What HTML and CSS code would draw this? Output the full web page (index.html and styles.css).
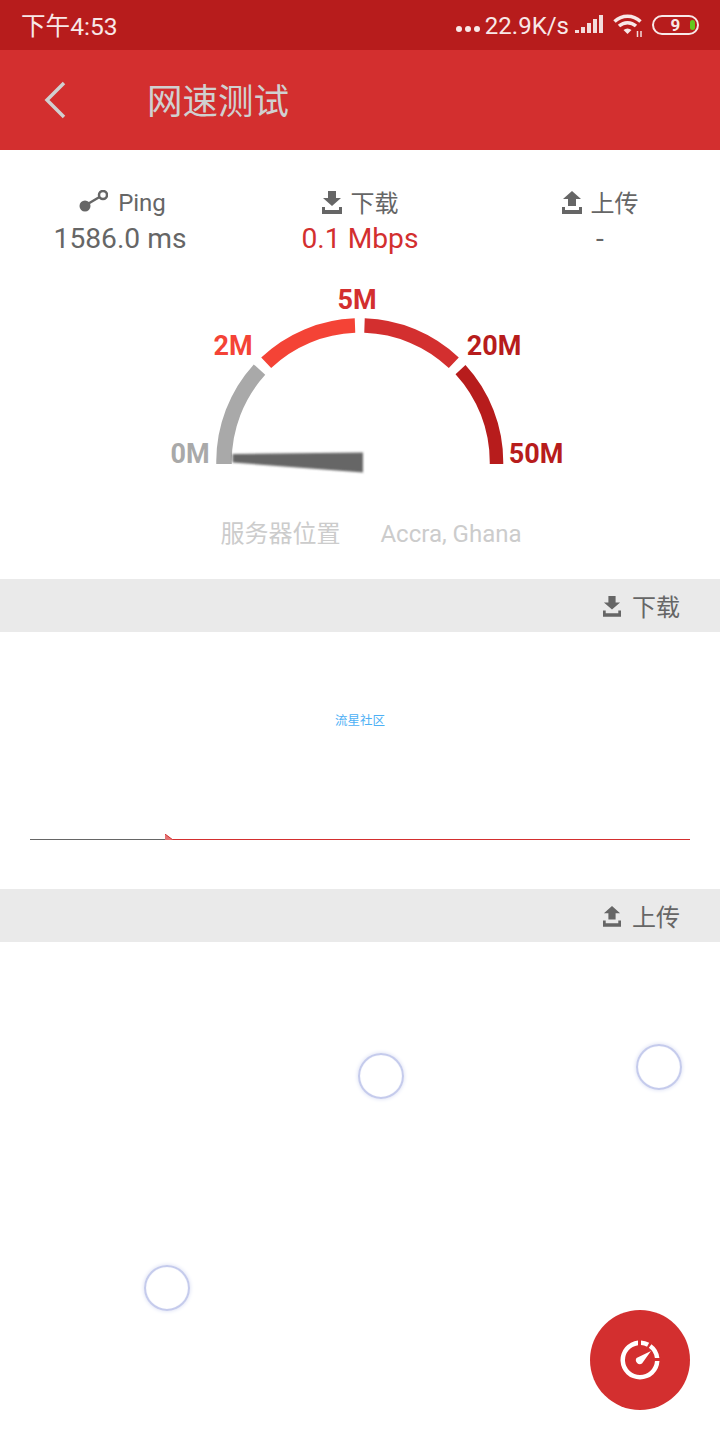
FILE: index.html
```html
<!DOCTYPE html>
<html lang="zh-CN">
<head>
    <meta charset="UTF-8">
    <title>网速测试</title>
    <link rel="stylesheet" href="styles.css">
</head>
<body>
    <div class="page">
        <div class="statusbar">
            <span class="time">下午4:53</span>
            <div class="status-right">
                <span class="dots"><i></i><i></i><i></i></span>
                <span class="netspeed">22.9K/s</span>
                <svg class="signal" width="28" height="20" viewBox="0 0 28 20">
                    <rect x="0" y="15" width="4" height="3" fill="#f3dcdc"/>
                    <rect x="6" y="12" width="4" height="6" fill="#f3dcdc"/>
                    <rect x="12" y="8" width="4" height="10" fill="#f3dcdc"/>
                    <rect x="18" y="4" width="4" height="14" fill="#f3dcdc"/>
                    <rect x="24" y="0" width="4" height="18" fill="#f3dcdc"/>
                </svg>
                <svg class="wifi" width="30" height="24" viewBox="0 0 30 24">
                    <path d="M1.5 8.5 C9 1.5 20 1.500 27.500 8.500" fill="none" stroke="#f8e8e8" stroke-width="3.500"/>
                    <path d="M6 13 C11 8.500 18 8.500 23 13" fill="none" stroke="#f8e8e8" stroke-width="3.500"/>
                    <path d="M10.500 17 C13 15 16 15 18.500 17 L14.500 21 Z" fill="#f8e8e8"/>
                    <path d="M24.500 18 v6 M28 18 v6" stroke="#f3dcdc" stroke-width="1.500"/>
                </svg>
                <div class="battery"><span class="batt-num">9</span><span class="batt-level"></span></div>
            </div>
        </div>

        <div class="appbar">
            <svg class="back" width="24" height="38" viewBox="0 0 24 38">
                <path d="M21 2 L4 19 L21 36" fill="none" stroke="#d0d0d0" stroke-width="3.500"/>
            </svg>
            <span class="title">网速测试</span>
        </div>

        <div class="stats">
            <div class="stat">
                <div class="stat-label">
                    <svg width="30" height="24" viewBox="0 0 30 24">
                        <circle cx="25" cy="5" r="4" fill="none" stroke="#666" stroke-width="2.500"/>
                        <path d="M21.500 7 L8 15" stroke="#666" stroke-width="2.500"/>
                        <circle cx="7" cy="16" r="5.500" fill="#666"/>
                    </svg>
                    <span class="ping-label">Ping</span>
                </div>
                <div class="stat-value">1586.0 ms</div>
            </div>
            <div class="stat">
                <div class="stat-label">
                    <svg width="20" height="24" viewBox="0 0 20 24">
                        <path d="M6 1 H14 V8 H19 L10 16 L1 8 H6 Z M0 17 H3 V20 H17 V17 H20 V24 H0 Z" fill="#666"/>
                    </svg>
                    <span class="cjk-label">下载</span>
                </div>
                <div class="stat-value red">0.1 Mbps</div>
            </div>
            <div class="stat">
                <div class="stat-label">
                    <svg width="20" height="24" viewBox="0 0 20 24">
                        <path d="M6 16 H14 V9 H19 L10 1 L1 9 H6 Z M0 17 H3 V20 H17 V17 H20 V24 H0 Z" fill="#666"/>
                    </svg>
                    <span class="cjk-label">上传</span>
                </div>
                <div class="stat-value">-</div>
            </div>
        </div>

        <div class="gauge">
            <svg width="720" height="210" viewBox="0 0 720 210">
                <defs>
                    <filter id="soft"><feGaussianBlur stdDeviation="1"/></filter>
                </defs>
                <g fill="none">
                    <path d="M224 185 L224 183 A136.500 136.500 0 0 1 259.500 90.600" stroke="#a9a9a9" stroke-width="15.500"/>
                    <path d="M266.200 83.800 A136.500 136.500 0 0 1 355 46.600" stroke="#f44336" stroke-width="14.500"/>
                    <path d="M364.500 46.600 A136.500 136.500 0 0 1 453.800 83.800" stroke="#d32f2f" stroke-width="14.500"/>
                    <path d="M460.500 90.600 A136.500 136.500 0 0 1 496.500 183 L496.500 185" stroke="#b71c1c" stroke-width="13.500"/>
                </g>
                <path d="M232.500 175 L363 173.500 L363 193.500 L232.500 183.500 Z" fill="#666" filter="url(#soft)"/>
                <g class="gauge-text">
                    <text x="190" y="184" text-anchor="middle" fill="#a9a9a9">0M</text>
                    <text x="233" y="76" text-anchor="middle" fill="#f44336">2M</text>
                    <text x="357" y="30" text-anchor="middle" fill="#d32f2f">5M</text>
                    <text x="494" y="76" text-anchor="middle" fill="#b71c1c">20M</text>
                    <text x="536" y="184" text-anchor="middle" fill="#b71c1c">50M</text>
                </g>
            </svg>
            <div class="server">
                <span>服务器位置</span>
                <span>Accra, Ghana</span>
            </div>
        </div>

        <div class="band">
            <svg width="18" height="22" viewBox="0 0 20 24">
                <path d="M6 1 H14 V8 H19 L10 16 L1 8 H6 Z M0 17 H3 V20 H17 V17 H20 V24 H0 Z" fill="#666"/>
            </svg>
            <span>下载</span>
        </div>
        <div class="chart">
            <span class="watermark">流星社区</span>
            <div class="axis">
                <span class="axis-done"></span>
                <svg class="axis-mark" width="8" height="6" viewBox="0 0 8 6">
                    <path d="M0 0 L8 6 H0 Z" fill="#e57373"/>
                    <path d="M0 0 L8 6" stroke="#d32f2f" stroke-width="1"/>
                </svg>
                <span class="axis-rest"></span>
            </div>
        </div>

        <div class="band">
            <svg width="18" height="22" viewBox="0 0 20 24">
                <path d="M6 16 H14 V9 H19 L10 1 L1 9 H6 Z M0 17 H3 V20 H17 V17 H20 V24 H0 Z" fill="#666"/>
            </svg>
            <span>上传</span>
        </div>
        <div class="chart-upload">
            <span class="touch touch-a"></span>
            <span class="touch touch-b"></span>
            <span class="touch touch-c"></span>
            <button class="fab">
                <svg width="40" height="40" viewBox="0 0 40 40">
                    <path d="M18 .6 A19.500 19.500 0 1 0 39.470 21 H34.970 A15 15 0 1 1 18 5.130 Z" fill="#fff"/>
                    <path d="M21 .53 A19.500 19.500 0 0 1 29.150 2.780 L27.040 6.760 A15 15 0 0 0 21 5.030 Z" fill="#fff"/>
                    <path d="M31.460 4.220 A19.500 19.500 0 0 1 39.400 18 H34.870 A15 15 0 0 0 28.820 7.860 Z" fill="#fff"/>
                    <path d="M31 11 L22 23.500 A4 4 0 0 1 16.500 18 Z" fill="#fff"/>
                </svg>
            </button>
        </div>
    </div>
</body>
</html>
```

FILE: styles.css
```css
* {
    box-sizing: border-box;
}
body {
    margin: 0;
    background-color: #fff;
    font-family: Roboto, "Noto Sans CJK SC", sans-serif;
    color: #666;
}
.page {
    width: 720px;
    height: 1440px;
    overflow: hidden;
    display: flex;
    flex-direction: column;
}
.statusbar {
    height: 50px;
    background-color: #b71c1c;
    color: #f8e8e8;
    display: flex;
    align-items: center;
    justify-content: space-between;
    padding: 0 21px;
    font-size: 24px;
}
.time {
    font-size: 24.600px;
    margin-top: -2px;
}
.status-right {
    display: flex;
    align-items: center;
}
.dots {
    display: flex;
    gap: 3px;
    margin: 8px 5px 0 0;
}
.dots i {
    width: 6px;
    height: 6px;
    border-radius: 50%;
    background-color: #f8e8e8;
}
.netspeed {
    margin-top: 2px;
}
.signal {
    margin: 0 10px 0 6px;
}
.wifi {
    margin-right: 9px;
}
.battery {
    width: 47px;
    height: 20px;
    border: 2px solid #f8e8e8;
    border-radius: 10px;
    position: relative;
    display: flex;
    align-items: center;
    justify-content: center;
}
.batt-num {
    font-size: 17px;
    font-weight: 700;
}
.batt-level {
    position: absolute;
    right: 2px;
    top: 3px;
    width: 5px;
    height: 10px;
    border-radius: 2.500px;
    background-color: #64c81e;
}
.appbar {
    height: 100px;
    background-color: #d32f2f;
    display: flex;
    align-items: center;
    padding-left: 43px;
}
.title {
    margin: -4px 0 0 80px;
    font-size: 35.500px;
    color: #d0d0d0;
}
.stats {
    display: grid;
    grid-template-columns: 240px 240px 240px;
    padding-top: 36px;
}
.stat {
    text-align: center;
}
.stat-label {
    display: flex;
    justify-content: center;
    align-items: center;
    gap: 9px;
    font-size: 24px;
    height: 32px;
}
.ping-label {
    margin: 2px -4px 0 1px;
}
.cjk-label {
    margin-top: -2px;
}
.stat-value {
    margin-top: 2px;
    font-size: 28.200px;
    line-height: 38px;
}
.red {
    color: #d32f2f;
}
.gauge {
    height: 321px;
    padding-top: 21px;
}
.gauge svg {
    display: block;
}
.gauge-text text {
    font-family: Roboto, sans-serif;
    font-size: 27px;
    font-weight: 700;
}
.server {
    display: flex;
    justify-content: center;
    align-items: baseline;
    gap: 40px;
    margin-top: 25px;
    padding-left: 22px;
    font-size: 24px;
    color: #ccc;
}
.band {
    height: 53px;
    background-color: #eaeaea;
    display: flex;
    align-items: center;
    justify-content: flex-end;
    gap: 11px;
    padding-right: 40px;
    font-size: 24px;
}
.chart {
    height: 257px;
    position: relative;
    padding: 0 30px;
}
.watermark {
    position: absolute;
    left: 0;
    right: 0;
    top: 78px;
    text-align: center;
    font-size: 12.500px;
    color: #4db0f5;
}
.axis {
    position: absolute;
    left: 30px;
    right: 30px;
    top: 207px;
    height: 1px;
    display: flex;
    align-items: flex-end;
}
.axis-done {
    width: 135px;
    height: 1px;
    background-color: #666;
}
.axis-mark {
    display: block;
    flex-shrink: 0;
}
.axis-rest {
    flex: 1;
    height: 1px;
    background-color: #d32f2f;
}
.chart-upload {
    flex: 1;
    position: relative;
}
.touch {
    position: absolute;
    width: 46px;
    height: 46px;
    border-radius: 50%;
    border: 2px solid #c5cbec;
    box-shadow: 0 0 4px #d5daf2, inset 0 0 1px #d5daf2;
}
.touch-a {
    left: 358px;
    top: 111px;
}
.touch-b {
    left: 636px;
    top: 102px;
}
.touch-c {
    left: 144px;
    top: 323px;
}
.fab {
    position: absolute;
    left: 590px;
    top: 368px;
    width: 100px;
    height: 100px;
    border: none;
    border-radius: 50%;
    background-color: #d32f2f;
    display: flex;
    align-items: center;
    justify-content: center;
    padding: 0;
}
```
